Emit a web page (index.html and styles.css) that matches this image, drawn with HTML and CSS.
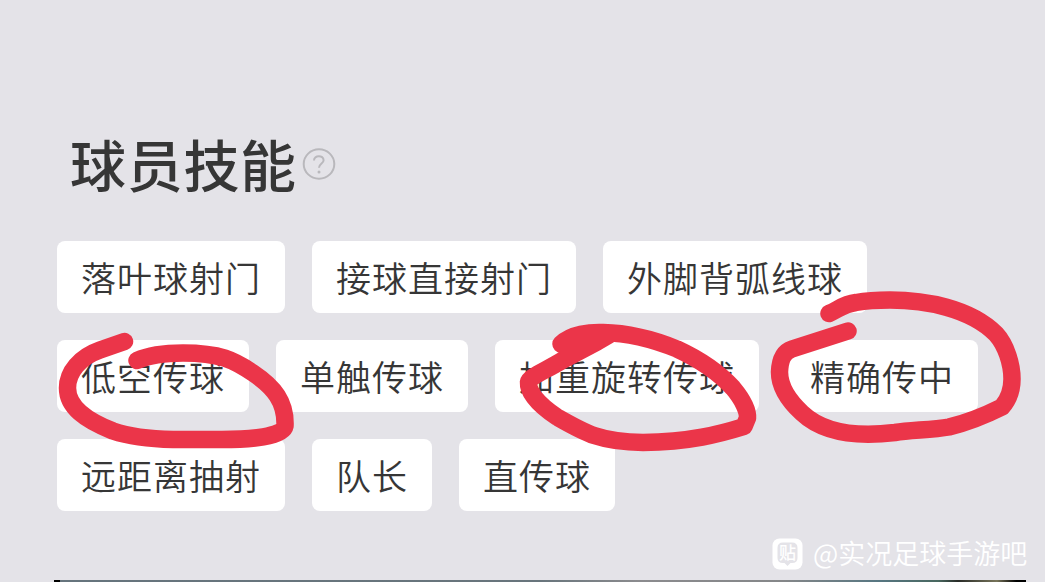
FILE: index.html
```html
<!DOCTYPE html>
<html lang="zh-CN">
<head>
    <meta charset="UTF-8">
    <meta name="viewport" content="width=device-width, initial-scale=1.0">
    <title>球员技能</title>
    <link rel="stylesheet" href="styles.css">
</head>
<body>
    <div class="page">
        <div class="title">
            <h1>球员技能</h1>
            <svg class="help" viewBox="0 0 34 34">
                <ellipse cx="17" cy="17" rx="15.3" ry="14.7" />
                <path d="M12 13.6C12 7.8 21.6 7.8 21.6 13.2C21.6 16.6 17 16.4 17 20.8" />
                <circle class="dot" cx="17" cy="25" r="1.5" />
            </svg>
        </div>
        <div class="skills">
            <div class="row">
                <span class="skill">落叶球射门</span>
                <span class="skill">接球直接射门</span>
                <span class="skill">外脚背弧线球</span>
            </div>
            <div class="row">
                <span class="skill">低空传球</span>
                <span class="skill">单触传球</span>
                <span class="skill">加重旋转传球</span>
                <span class="skill">精确传中</span>
            </div>
            <div class="row">
                <span class="skill">远距离抽射</span>
                <span class="skill">队长</span>
                <span class="skill">直传球</span>
            </div>
        </div>
        <div class="watermark">
            <svg class="badge" viewBox="0 0 32 32">
                <rect x="1.5" y="0.5" width="30" height="31" rx="7" fill="#fff" />
                <path d="M12 4.5H21Q26.5 4.5 26.5 10V20Q26.5 25 21 25H19.5L16.5 28L13.5 25H12Q6.5 25 6.5 20V10Q6.5 4.5 12 4.5Z" fill="#e4e3e8" />
                <text x="16.5" y="21" text-anchor="middle">贴</text>
            </svg>
            <span>@实况足球手游吧</span>
        </div>
        <div class="next-image"></div>
    </div>

    <!-- red marker circles -->
    <svg class="marks" viewBox="0 0 1045 582">
        <path d="M124.5 341.5L100 350C80 357 67.5 372 67.5 388C67.5 407 85 420 113 431C132 437.5 150 439 173 439.5H222C250 439.5 283 437 285 426C286 402 274 387 253 373C234 360 220 353 183 353C160 353 147 356 137 360.5" />
        <path d="M561 344C571 334 590 332 603 332.5C630 333 655 340 677 349C703 361 722 376 733 388C743 400 748 411 747.5 418L744 426.5C720 434 690 442 643 442.5C600 442 585 433 557 417C536 403 528 391 528.5 382C529 377 545 371 563 360L597 342L609 335L565 343" />
        <path d="M829 313.5C838 310 843 304 856 302.5C870 300 880 300 890 300C925 300 970 308 996 334C1006 345 1012 364 1012 379C1012 390 1009 399 1002 407C990 413 970 422 949 427C932 430 911 430 895 432.5C850 438 820 430 802 413C788 400 779.5 385 779.5 372C780 360 783 352 792 349L848 331" />
    </svg>
</body>
</html>
```
FILE: styles.css
```css
* {
    box-sizing: border-box;
}
body {
    margin: 0;
    background-color: #e4e3e8;
    color: #363636;
    font-family: "Noto Sans CJK SC", sans-serif;
}
.page {
    display: flex;
    flex-direction: column;
    height: 582px;
    padding-top: 123px;
    overflow: hidden;
}
.title {
    display: flex;
    align-items: center;
    height: 80px;
    padding-left: 70px;
}
h1 {
    margin: 0;
    font-size: 56px;
    font-weight: 500;
    letter-spacing: 0.7px;
    line-height: 80px;
}
.help {
    width: 34px;
    height: 34px;
    margin: 2px 0 0 5px;
    fill: none;
    stroke: #b9b8bc;
    stroke-width: 2;
}
.help .dot {
    fill: #b9b8bc;
    stroke: none;
}
.skills {
    display: flex;
    flex-direction: column;
    gap: 27px;
    padding: 38.4px 0 0 57px;
}
.row {
    display: flex;
    gap: 27px;
}
.skill {
    height: 72px;
    padding: 0 24px;
    border-radius: 8px;
    background-color: white;
    font-size: 35px;
    font-weight: 350;
    letter-spacing: 1px;
    line-height: 71px;
    white-space: nowrap;
}
.watermark {
    display: flex;
    align-items: center;
    gap: 10px;
    height: 40px;
    margin-top: 23px;
    padding-left: 771px;
    color: white;
    font-size: 27px;
    font-weight: 350;
    line-height: 37px;
    white-space: nowrap;
}
.watermark span {
    height: 40px;
}
.badge {
    width: 32px;
    height: 32px;
}
.badge text {
    fill: white;
    font-size: 17px;
    font-weight: 500;
}
.next-image {
    height: 2px;
    margin: auto 19px 0 54px;
    background: linear-gradient(to right, #000 6px, #66747d 6px, #68757c 50%, #8b8b8e 60%, #858789 75%, #567681 85%, #48675f 91%, #282b27 93%, #77745a 97%, #000 99%);
}
.marks {
    position: absolute;
    top: 0;
    left: 0;
    width: 1045px;
    height: 582px;
    fill: none;
    stroke: #eb3549;
    stroke-width: 17.5;
    stroke-linecap: round;
    stroke-linejoin: round;
}
```
